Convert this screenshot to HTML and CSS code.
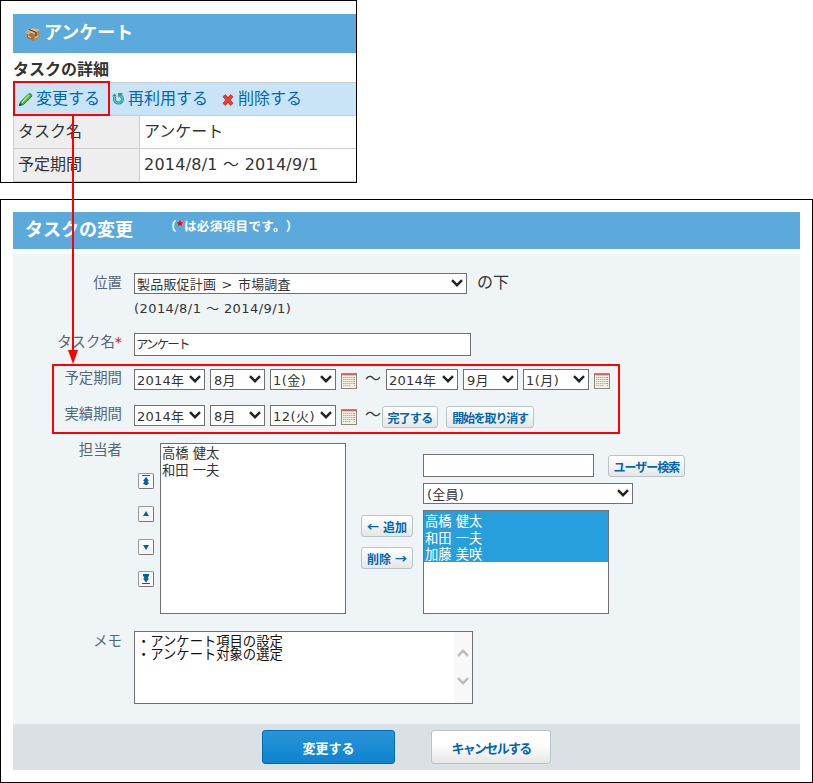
FILE: index.html
```
<!DOCTYPE html>
<html lang="ja">
<head>
<meta charset="utf-8">
<title>タスクの変更</title>
<link rel="stylesheet" href="styles.css">
</head>
<body>
<svg width="0" height="0" class="defs">
  <symbol id="chev" viewBox="0 0 12 8"><path d="M1 1.200 6 6.200 11 1.200" fill="none" stroke="currentColor" stroke-width="2.400"/></symbol>
  <symbol id="cal" viewBox="0 0 16 16"><rect x=".5" y=".5" width="15" height="15" fill="#f3f0e6" stroke="#9c937f"/><path d="M1 1.500h14" stroke="#dd6154" stroke-width="1.600"/><path d="M2 4.500h11M2 6.500h11M2 8.500h11M2 10.500h11M2 12.500h8" stroke="#b5b2aa" stroke-dasharray="1.500 .5"/><path d="M13.500 4v9" stroke="#d98058" stroke-dasharray="1 1"/><path d="M15.500 1v14.500H.5V1" fill="none" stroke="#8f8776"/></symbol>
</svg>

<section class="detail">
  <header class="bar">
    <svg class="box-icon" width="16" height="15" viewBox="0 0 16 15"><path d="M1 4 8 1l7 2-6 4z" fill="#e0b98c"/><path d="M1 4l8 3v7l-7-3z" fill="#a8713f"/><path d="M9 7l6-4v7l-6 4z" fill="#c18a55"/><path d="M0 5l4-2 2 3-3 2z" fill="#d3a574"/><path d="M4 2.500l7 3V9" fill="none" stroke="#5b4330" stroke-width="1.300"/><path d="M3 9l3 1.500M10.500 11l3-2" stroke="#f0d6b2"/></svg>
    <h1>アンケート</h1>
  </header>
  <h2>タスクの詳細</h2>
  <nav class="actions">
    <a class="edit"><svg width="15" height="15" viewBox="0 0 15 15"><path d="M1.500 13.500l1-3.500L10 2.500q1.500-1.500 3-.3t.2 2.800L5.500 12.500z" fill="#52b83f" stroke="#237a22"/><path d="M4 10.500l7-7.500" stroke="#a6e891" stroke-width="1.500"/><path d="M1 14l1-3 2 2z" fill="#333"/></svg><span>変更する</span></a>
    <a class="reuse"><svg width="13" height="13" viewBox="0 0 13 13"><path d="M2.500 5v2a4 4 0 0 0 8 0q0-2-2-3.500" fill="none" stroke="#218f91" stroke-width="3"/><path d="M2.500 5v2a4 4 0 0 0 8 0q0-2-2-3.500" fill="none" stroke="#64cbc5" stroke-width="1.300"/><path d="M6 1h5L6.500 6z" fill="#259a9a"/><path d="M0 4.500l2.500-3 2.500 3z" fill="#218f91"/></svg><span>再利用する</span></a>
    <a class="delete"><svg width="12" height="12" viewBox="0 0 12 12"><path d="M2 1.500 10 10.500M10 1.500 2 10.500" stroke="#c5201c" stroke-width="3.800"/><path d="M2 1.500 10 10.500M10 1.500 2 10.500" stroke="#ef4038" stroke-width="2.200"/></svg><span>削除する</span></a>
  </nav>
  <dl>
    <dt>タスク名</dt><dd>アンケート</dd>
    <dt>予定期間</dt><dd class="dates">2014/8/1 ～ 2014/9/1</dd>
  </dl>
</section>

<section class="editor">
  <header class="bar"><h1>タスクの変更</h1><p>（<b>*</b>は必須項目です。）</p></header>
  <form>
    <div class="row place">
      <label>位置</label>
      <div class="line"><div class="select w333"><span>製品販促計画 &gt; 市場調査</span><svg><use href="#chev"/></svg></div><span class="under">の下</span></div>
    </div>
    <p class="range">(2014/8/1 ～ 2014/9/1)</p>
    <div class="row name"><label>タスク名<b>*</b></label><div class="input">アンケート</div></div>
    <div class="row plan">
      <label>予定期間</label>
      <div class="line">
        <div class="select year"><span>2014年</span><svg><use href="#chev"/></svg></div>
        <div class="select month"><span>8月</span><svg><use href="#chev"/></svg></div>
        <div class="select day"><span>1(金)</span><svg><use href="#chev"/></svg></div>
        <svg class="cal"><use href="#cal"/></svg><span class="tilde">～</span>
        <div class="select year end"><span>2014年</span><svg><use href="#chev"/></svg></div>
        <div class="select month"><span>9月</span><svg><use href="#chev"/></svg></div>
        <div class="select day"><span>1(月)</span><svg><use href="#chev"/></svg></div>
        <svg class="cal"><use href="#cal"/></svg>
      </div>
    </div>
    <div class="row actual">
      <label>実績期間</label>
      <div class="line">
        <div class="select year"><span>2014年</span><svg><use href="#chev"/></svg></div>
        <div class="select month"><span>8月</span><svg><use href="#chev"/></svg></div>
        <div class="select day"><span>12(火)</span><svg><use href="#chev"/></svg></div>
        <svg class="cal"><use href="#cal"/></svg><span class="tilde">～</span>
        <div class="button finish"><span>完了する</span></div>
        <div class="button undo"><span>開始を取り消す</span></div>
      </div>
    </div>
    <div class="row people">
      <label>担当者</label>
      <div class="order">
        <i><svg viewBox="0 0 16 16"><path d="M8 4l3 4H9.500l1.500 3H9.500v1h-3v-1H5l1.500-3H5z" stroke="none"/><path d="M4 2.500h8"/></svg></i>
        <i><svg viewBox="0 0 16 16"><path d="M8 5l3 5H5z" stroke="none"/></svg></i>
        <i><svg viewBox="0 0 16 16"><path d="M8 11l3-5H5z" stroke="none"/></svg></i>
        <i><svg viewBox="0 0 16 16"><path d="M8 11.500l3-4H9.500L11 4.500V3H5v1.500l1.500 3H5z" stroke="none"/><path d="M4 12.500h8"/></svg></i>
      </div>
      <ul class="list chosen"><li>高橋 健太</li><li>和田 一夫</li></ul>
      <div class="move"><div class="button"><span>← 追加</span></div><div class="button"><span>削除 →</span></div></div>
      <div class="pool">
        <div class="line"><div class="input search"></div><div class="button find"><span>ユーザー検索</span></div></div>
        <div class="select everyone"><span>(全員)</span><svg><use href="#chev"/></svg></div>
        <ul class="list all"><li>高橋 健太</li><li>和田 一夫</li><li>加藤 美咲</li></ul>
      </div>
    </div>
    <div class="row memo">
      <label>メモ</label>
      <div class="area"><p>・アンケート項目の設定<br>・アンケート対象の選定</p><div class="scroll"><svg class="up"><use href="#chev"/></svg><svg><use href="#chev"/></svg></div></div>
    </div>
  </form>
  <footer><div class="primary"><span>変更する</span></div><div class="cancel"><span>キャンセルする</span></div></footer>
</section>

<div class="mark mark-edit"></div>
<div class="mark mark-dates"></div>
<svg class="arrow" width="14" height="250" viewBox="0 0 14 250"><path d="M7 0v238" stroke="#f00" stroke-width="2"/><path d="M2 235h10L7 249z" fill="#f00"/></svg>
</body>
</html>
```

FILE: styles.css
```
* { box-sizing: border-box; margin: 0; padding: 0; }
body { width: 813px; height: 783px; position: relative; overflow: hidden; background: #fff; color: #333; font: 16px/20px "DejaVu Sans", "Noto Sans CJK JP", sans-serif; white-space: nowrap; }
svg { display: block; flex: none; }
.defs { position: absolute; }
h1, h2 { font: bold 18px/24px "Noto Sans CJK JP", sans-serif; }
ul { list-style: none; }

.detail { width: 357px; height: 183px; border: 1px solid #000; padding: 13px 0 0 12px; overflow: hidden; }
.bar { display: flex; background: #5caadc; color: #fff; }
.detail .bar { height: 39px; padding: 5px 0 0 12px; }
.box-icon { margin: 8px 2px 0 0; }
.detail .bar h1 { margin-left: 1px; }
.detail h2 { font-size: 16px; height: 29px; line-height: 31px; }
.actions { display: flex; height: 34px; background: #c9e4f6; border-top: 1px solid #ccc; border-bottom: 1px solid #ccc; color: #0067b0; }
.actions a { display: flex; line-height: 31px; }
.actions svg { margin-top: 9px; }
.edit { width: 99px; padding-left: 5px; gap: 3px; }
.reuse { width: 110px; padding-left: 0; gap: 3px; }
.delete { gap: 4px; }
.actions .delete svg { margin-top: 11px; }
dl { display: grid; grid-template-columns: 127px 1fr; }
dt, dd { height: 33px; line-height: 32px; border-bottom: 1px solid #ccc; padding-left: 4px; }
dt { background: #eee; border-left: 1px solid #ccc; border-right: 1px solid #ccc; }
.dates { letter-spacing: .24px; }

.editor { width: 813px; height: 584px; margin-top: 16px; border: 1px solid #000; padding: 12px 12px 0; }
.editor .bar { height: 37px; padding: 5px 0 0 12px; }
.editor h1 { line-height: 23px; }
.editor .bar p { font: bold 12.500px/18px "Noto Sans CJK JP", sans-serif; margin-left: 31px; letter-spacing: .4px; text-spacing-trim: space-all; }
b { color: #f00; }
form { height: 470px; margin-top: 5px; padding-top: 19px; background: #eff4f7; }
.row { display: flex; }
.row label { width: 109px; margin-right: 12px; flex: none; text-align: right; color: #567; font-size: 14.400px; line-height: 20px; }
.line { display: flex; }
.select, .input, .list, .area { background: #fff; border: 1px solid #707070; }
.select { display: flex; justify-content: space-between; height: 21px; padding: 0 3px 0 2px; font-size: 13px; line-height: 21px; letter-spacing: .2px; }
.select svg { width: 12px; height: 8px; margin-top: 5px; color: #222; }
.w333 { width: 333px; word-spacing: 1px; }
.under { margin-left: 10px; }
.range { margin: 4px 0 0 121px; font-size: 13px; line-height: 22px; letter-spacing: .43px; }
.place { height: 21px; }
.name { margin-top: 13px; }
.name b { font-weight: normal; }
.name label { line-height: 18px; }
.input { width: 337px; height: 23px; padding-left: 1px; font-size: 12.500px; line-height: 22px; letter-spacing: -1.900px; }
.plan { margin-top: 13px; height: 36px; }
.plan label, .actual label { line-height: 19px; }
.actual { height: 38px; }
.year { width: 71px; }
.end { width: 72px; }
.month { width: 55px; margin-left: 5px; padding-left: 3px; }
.day { width: 66px; margin-left: 5px; letter-spacing: .5px; }
.cal { width: 16px; height: 16px; margin: 4px 0 0 5px; }
.tilde { width: 29px; padding-left: 8px; line-height: 20px; }
.button { height: 22px; border: 1px solid #b7c4c8; border-radius: 3px; background: linear-gradient(#fff, #e6e6e6); color: #0067b0; font: bold 12px/21px "Noto Sans CJK JP", sans-serif; display: flex; justify-content: center; }
.finish { width: 56px; margin: 1px 0 0 -4px; letter-spacing: -.7px; }
.undo { width: 88px; margin: 1px 0 0 8px; letter-spacing: -1.200px; }
.people { height: 171px; }
.people label { line-height: 14px; }
.order { display: grid; grid-template-rows: 33px 33px 32px 16px; width: 16px; height: 114px; margin: 30px 6px 0 4px; }
.order i { height: 16px; border: 1px solid #999; border-right-color: #777; border-bottom-color: #777; border-radius: 2px; background: #f7f7f7; }
.order svg { margin: -1px; width: 16px; height: 16px; fill: #00639c; stroke: #00639c; }
.list { width: 186px; height: 171px; padding-top: 1px; font-size: 13.300px; line-height: 17px; }
.list li { padding-left: 1px; }
.move { display: flex; flex-direction: column; gap: 10px; width: 52px; margin: 72px 10px 0 15px; word-spacing: 1.500px; }
.pool { width: 262px; padding-top: 11px; }
.search { width: 171px; }
.find { width: 77px; margin: 1px 0 0 14px; letter-spacing: -1px; }
.everyone { width: 210px; margin: 6px 0; padding-left: 3px; }
.list.all { height: 104px; padding: 0; }
.all li { background: #269fdc; color: #fff; height: 17px; line-height: 21px; }
.all li:last-child { line-height: 19px; }
.memo { margin-top: 17px; }
.area { width: 339px; height: 73px; display: flex; justify-content: space-between; font-size: 13.300px; line-height: 13px; color: #111; }
.area p { padding: 2px 0 0 2px; font-family: "Noto Sans CJK JP", sans-serif; }
.scroll { width: 18px; background: #f8f8f8; color: #bbb; padding: 17px 3px; display: flex; flex-direction: column; gap: 20px; }
.scroll svg { width: 12px; height: 8px; }
.up { transform: rotate(180deg); }
footer { display: flex; height: 46px; padding: 6px 0 0 249px; background: #dbe0e4; }
.primary, .cancel { display: flex; justify-content: center; height: 34px; border: 1px solid #006bb0; border-radius: 3px; font: bold 13px/33px "Noto Sans CJK JP", sans-serif; }
.primary { width: 133px; background: linear-gradient(#2993d8, #0e83d0); color: #fff; }
.cancel { width: 120px; margin-left: 36px; border-color: #b7c4c8; background: linear-gradient(#fff 40%, #e6e6e6); color: #0067b0; letter-spacing: -1.700px; }

.mark { position: absolute; border: 2px solid #f00; }
.mark-edit { left: 13px; top: 81px; width: 97px; height: 35px; }
.mark-dates { left: 52px; top: 364px; width: 568px; height: 70px; }
.arrow { position: absolute; left: 66px; top: 115px; }
```
